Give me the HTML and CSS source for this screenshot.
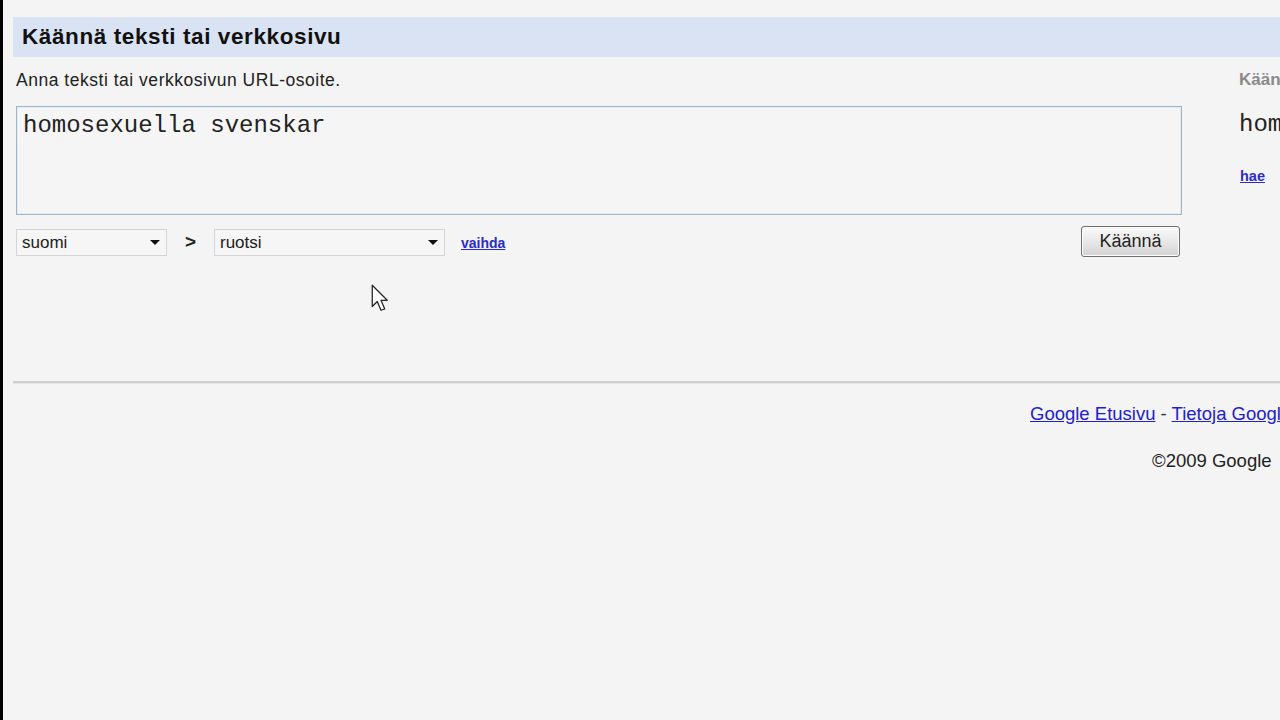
FILE: index.html
```html
<!DOCTYPE html>
<html lang="fi">
<head>
<meta charset="utf-8">
<title>Google Kääntäjä</title>
<link rel="stylesheet" href="styles.css">
</head>
<body>
<div class="page">
  <div class="header"><h1 class="title">Käännä teksti tai verkkosivu</h1></div>
  <div class="main">
    <div class="left">
      <div class="prompt">Anna teksti tai verkkosivun URL-osoite.</div>
      <div class="source">homosexuella svenskar</div>
      <div class="controls">
        <div class="select sel-from"><span>suomi</span><i class="arrow"></i></div>
        <span class="gt">&gt;</span>
        <div class="select sel-to"><span>ruotsi</span><i class="arrow"></i></div>
        <a class="swap" href="#">vaihda</a>
        <button class="btn" type="button">Käännä</button>
      </div>
    </div>
    <div class="right">
      <div class="result-title">Käännös</div>
      <div class="result">homosexuella svenskar</div>
      <a class="search" href="#">hae</a>
    </div>
  </div>
  <div class="rule"></div>
  <div class="footer">
    <div class="links"><a href="#">Google Etusivu</a> - <a href="#">Tietoja Googlen kääntäjästä</a></div>
    <div class="copy">©2009 Google</div>
  </div>
  <svg class="cursor" width="20" height="30" viewBox="0 0 16 24"><path d="M1 1 L1 18 L5 14 L8 21 L11 20 L8 13 L13 13 Z" fill="#fff" stroke="#222" stroke-width="1" stroke-linejoin="round"/></svg>
</div>
</body>
</html>
```
FILE: styles.css
```css
html, body {
  margin: 0;
  padding: 0;
  height: 100%;
}
body {
  background: #f4f4f4;
  font-family: "Liberation Sans", Arial, sans-serif;
  color: #222;
  overflow: hidden;
}
.page {
  position: relative;
  height: 720px;
  border-left: 3px solid #000;
  padding-left: 10px;
  padding-top: 17px;
  box-sizing: border-box;
  width: 1280px;
  overflow: hidden;
}
.header {
  height: 40px;
  background: #dae3f3;
  display: flex;
  align-items: center;
  padding-left: 9px;
}
.title {
  margin: 0;
  font-size: 22.5px;
  letter-spacing: 0.6px;
  font-weight: bold;
  color: #111;
  white-space: nowrap;
}
.main {
  display: flex;
  gap: 56px;
  white-space: nowrap;
}
.left {
  width: 1170px;
  flex: none;
  padding-left: 3px;
  box-sizing: border-box;
}
.prompt {
  margin-top: 14px;
  font-size: 17.5px;
  letter-spacing: 0.52px;
  line-height: 18px;
  color: #222;
}
.source {
  margin-top: 17px;
  border: 1px solid #9fb4c4;
  box-shadow: inset 0 0 0 1px #e3ecf2;
  font-family: "Liberation Mono", "Courier New", monospace;
  font-size: 24px;
  line-height: 26px;
  padding: 6px 5px 6px 6px;
  box-sizing: border-box;
  height: 109px;
  width: 1166px;
  color: #222;
  background: #f5f5f5;
}
.controls {
  display: flex;
  align-items: center;
  margin-top: 11px;
  height: 31px;
}
.select {
  height: 27px;
  margin-top: 2px;
  border: 1px solid #d4d4d4;
  background: #f6f6f6;
  box-sizing: border-box;
  display: flex;
  align-items: center;
  justify-content: space-between;
  padding: 0 6px 0 5px;
  font-size: 17px;
  color: #222;
}
.sel-from { width: 151px; }
.sel-to { width: 231px; }
.arrow {
  width: 0;
  height: 0;
  border-left: 5px solid transparent;
  border-right: 5px solid transparent;
  border-top: 5px solid #111;
}
.gt {
  width: 47px;
  text-align: center;
  font-size: 19px;
  font-weight: bold;
  color: #222;
}
.swap {
  margin-left: 16px;
  margin-top: 2px;
  font-size: 14px;
  font-weight: bold;
  color: #2b2bc8;
  text-decoration: underline;
}
.btn {
  margin-left: auto;
  margin-right: 3px;
  width: 99px;
  height: 31px;
  border: 1px solid #6f6f6f;
  border-radius: 3px;
  background: linear-gradient(#fafafa, #e6e6e6 55%, #d2d2d2);
  box-shadow: inset 0 0 0 1px #fdfdfd;
  font-family: "Liberation Sans", Arial, sans-serif;
  font-size: 18px;
  color: #222;
  padding: 0;
}
.right {
  flex: none;
}
.result-title {
  margin-top: 14px;
  font-size: 17px;
  line-height: 18px;
  font-weight: bold;
  color: #8a8a8a;
}
.result {
  margin-top: 23px;
  font-family: "Liberation Mono", "Courier New", monospace;
  font-size: 24px;
  line-height: 26px;
  color: #222;
}
.search {
  display: inline-block;
  margin-top: 30px;
  margin-left: 1px;
  font-size: 14.5px;
  font-weight: bold;
  color: #2b2bc8;
}
.rule {
  margin-top: 124px;
  height: 2px;
  background: #cfcfcf;
  border-bottom: 1px solid #e6e6e6;
}
.footer {
  margin-left: 1017px;
  white-space: nowrap;
}
.links {
  margin-top: 19px;
  font-size: 18.5px;
  line-height: 22px;
  color: #333;
}
.links a {
  color: #2121c8;
  text-decoration: underline;
}
.copy {
  margin-top: 25px;
  margin-left: 122px;
  font-size: 18.5px;
  line-height: 22px;
  color: #222;
}
.cursor {
  position: absolute;
  left: 368px;
  top: 284px;
}
```
